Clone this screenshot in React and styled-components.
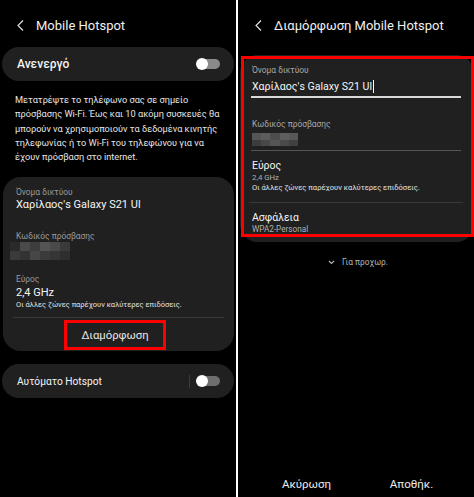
import React from "react";
import styled, { createGlobalStyle } from "styled-components";

const Global = createGlobalStyle`
  html, body { margin: 0; padding: 0; background: #fff; }
  body { font-family: Roboto, "Noto Sans", sans-serif; -webkit-font-smoothing: antialiased; }
  * { box-sizing: border-box; }
`;

const Screen = styled.div`
  display: flex;
  gap: 2px;
  width: 474px;
  height: 497px;
  background: #fff;
`;

const Panel = styled.div`
  width: 236px;
  height: 497px;
  background: #000;
  color: #f3f3f3;
  display: flex;
  flex-direction: column;
  overflow: hidden;
`;

const Header = styled.div`
  height: 47px;
  display: flex;
  align-items: center;
  gap: 12px;
  padding: 3px 0 0 17px;
  font-size: 13px;
  color: #f0f0f0;
  flex-shrink: 0;
`;

const Card = styled.div`
  background: #202020;
  border-radius: 17px;
  margin: 0 2px;
`;

const RowCard = styled(Card)`
  height: 34px;
  display: flex;
  align-items: center;
  padding: 0 14px 0 15px;
  font-size: ${(p) => p.$fs}px;
  font-weight: ${(p) => p.$fw || 400};
  margin-top: ${(p) => p.$mt || 0}px;
  white-space: nowrap;
`;

const RowLabel = styled.div`
  flex: 1;
`;

const VDivider = styled.div`
  width: 1px;
  height: 13px;
  background: #3c3c3c;
  margin-right: 7px;
`;

const Toggle = styled.div`
  position: relative;
  width: 23px;
  height: 10px;
  border-radius: 5px;
  background: ${(p) => p.$track};
  &::after {
    content: "";
    position: absolute;
    left: -1px;
    top: -1px;
    width: 12px;
    height: 12px;
    border-radius: 50%;
    background: #fff;
  }
`;

const Desc = styled.p`
  margin: 12px 0 0;
  padding: 0 8px 0 15px;
  font-size: 9.2px;
  line-height: 14.3px;
  color: #e6e6e6;
  white-space: nowrap;
`;

const InfoCard = styled(Card)`
  margin: 13px 2px 0 3px;
  padding: 9px 0 1px;
  border-radius: 18px;
`;

const Block = styled.div`
  padding: 0 13px;
  margin-top: ${(p) => p.$mt || 0}px;
`;

const Label = styled.div`
  font-size: ${(p) => p.$fs || 8.4}px;
  line-height: ${(p) => p.$lh || 12}px;
  color: ${(p) => p.$c || "#9a9a9a"};
  margin-top: ${(p) => p.$mt || 0}px;
  white-space: nowrap;
`;

const Value = styled.div`
  font-size: ${(p) => p.$fs || 11}px;
  line-height: ${(p) => p.$lh || 14}px;
  color: #f5f5f5;
  margin-top: ${(p) => p.$mt || 0}px;
  white-space: nowrap;
`;

const Mosaic = styled.div`
  display: grid;
  grid-template-columns: repeat(${(p) => p.$cols}, ${(p) => p.$w}px);
  grid-auto-rows: ${(p) => p.$h}px;
  margin: ${(p) => p.$m || 0};
`;

const Tile = styled.div`
  background: ${(p) => p.$c};
`;

const HLine = styled.div`
  height: ${(p) => p.$t || 1}px;
  background: ${(p) => p.$c || "#333"};
  margin: ${(p) => p.$m};
`;

const ButtonRow = styled.div`
  display: flex;
  justify-content: center;
  padding: 2px 0 0;
`;

const RedBox = styled.div`
  border: 3px solid #ff0000;
`;

const ConfigButton = styled(RedBox)`
  width: 102px;
  height: 30px;
  margin-left: -7px;
  display: flex;
  align-items: center;
  justify-content: center;
  font-size: 11.3px;
  color: #e8e8e8;
`;

const EditCard = styled(Card)`
  margin: 8px 0 0 2px;
  border-radius: 18px;
  padding: 1px 0 5px;
`;

const EditArea = styled(RedBox)`
  margin-left: 1px;
  padding: 5px 10px 0 8px;
`;

const Cursor = styled.span`
  display: inline-block;
  width: 1.5px;
  height: 13px;
  background: #fff;
  vertical-align: -3px;
  margin-left: 1px;
`;

const Advanced = styled.div`
  margin-top: 14px;
  height: 12px;
  display: flex;
  justify-content: center;
  align-items: center;
  gap: 7px;
  font-size: 8.4px;
  color: #b5b5b5;
  padding-left: 4px;
`;

const Footer = styled.div`
  margin-top: auto;
  display: flex;
  height: 26px;
  align-items: center;
  font-size: 11.5px;
  color: #ececec;
`;

const FooterBtn = styled.div`
  flex: 1;
  text-align: center;
  padding: ${(p) => p.$pad || 0};
`;

const Back = () => (
  <svg width="7" height="11" viewBox="0 0 7 11">
    <polyline points="6,0.5 1,5.5 6,10.5" fill="none" stroke="#e8e8e8" strokeWidth="1.1" />
  </svg>
);

const ChevronDown = () => (
  <svg width="7" height="5" viewBox="0 0 7 5">
    <polyline points="1,1 3.5,3.5 6,1" fill="none" stroke="#b5b5b5" strokeWidth="1.1" />
  </svg>
);

const pw1 = [
  "#2a2a2a", "#4a4a4a", "#3d3d3d", "#545454", "#4a4a4a", "#3a3a3a",
  "#3a3a3a", "#333", "#464646", "#3b3b3b", "#353535", "#2e2e2e",
];
const pw2 = [
  "#555", "#5c5c5c", "#4d4d4d", "#5e5e5e", "#575757",
  "#3d3d3d", "#484848", "#555", "#4a4a4a", "#404040",
];

export default function App() {
  return (
    <>
      <Global />
      <Screen>
        <Panel>
          <Header>
            <Back />
            <span>Mobile Hotspot</span>
          </Header>
          <RowCard $fs={12} $fw={500}>
            <RowLabel>Ανενεργό</RowLabel>
            <Toggle $track="#8a8a8a" />
          </RowCard>
          <Desc>
            Μετατρέψτε το τηλέφωνο σας σε σημείο
            <br />
            πρόσβασης Wi-Fi. Έως και 10 ακόμη συσκευές θα
            <br />
            μπορούν να χρησιμοποιούν τα δεδομένα κινητής
            <br />
            τηλεφωνίας ή το Wi-Fi του τηλεφώνου για να
            <br />
            έχουν πρόσβαση στο internet.
          </Desc>
          <InfoCard>
            <Block>
              <Label>Όνομα δικτύου</Label>
              <Value>Χαρίλαος's Galaxy S21 Ul</Value>
            </Block>
            <Block $mt={18}>
              <Label>Κωδικός πρόσβασης</Label>
              <Mosaic $cols={6} $w={10} $h={9} $m="0 0 0 -6px">
                {pw1.map((c, i) => (
                  <Tile key={i} $c={c} />
                ))}
              </Mosaic>
            </Block>
            <Block $mt={13}>
              <Label>Εύρος</Label>
              <Value $lh={15}>2,4 GHz</Value>
              <Label $fs={7.5} $lh={9} $c="#e0e0e0">
                Οι άλλες ζώνες παρέχουν καλύτερες επιδόσεις.
              </Label>
            </Block>
            <HLine $c="#383838" $m="8px 10px 0" />
            <ButtonRow>
              <ConfigButton>Διαμόρφωση</ConfigButton>
            </ButtonRow>
          </InfoCard>
          <RowCard $fs={10.2} $mt={13}>
            <RowLabel>Αυτόματο Hotspot</RowLabel>
            <VDivider />
            <Toggle $track="#6e6e6e" />
          </RowCard>
        </Panel>

        <Panel>
          <Header>
            <Back />
            <span>Διαμόρφωση Mobile Hotspot</span>
          </Header>
          <EditCard>
            <EditArea>
              <Label $c="#a8a8a8">Όνομα δικτύου</Label>
              <Value $fs={10.6} $mt={4}>
                Χαρίλαος's Galaxy S21 Ul
                <Cursor />
              </Value>
              <HLine $t={1.5} $c="#d8d8d8" $m="2px 0 0 -1px" />
              <Label $c="#a8a8a8" $mt={20.5}>
                Κωδικός πρόσβασης
              </Label>
              <Mosaic $cols={5} $w={9.2} $h={6.5} $m="3px 0 0">
                {pw2.map((c, i) => (
                  <Tile key={i} $c={c} />
                ))}
              </Mosaic>
              <HLine $c="#555" $m="4px 0 0 -1px" />
              <Value $fs={10.5} $mt={8}>
                Εύρος
              </Value>
              <Label $c="#b0b0b0" $fs={7.8} $lh={10}>2,4 GHz</Label>
              <Label $c="#e0e0e0" $fs={7.6} $lh={10}>
                Οι άλλες ζώνες παρέχουν καλύτερες επιδόσεις.
              </Label>
              <HLine $c="#383838" $m="9px -2px 0 -3px" />
              <Value $fs={10.5} $mt={8}>
                Ασφάλεια
              </Value>
              <Label $c="#b0b0b0" $fs={8.2} $lh={9}>WPA2-Personal</Label>
            </EditArea>
          </EditCard>
          <Advanced>
            <ChevronDown />
            <span>Για προχωρ.</span>
          </Advanced>
          <Footer>
            <FooterBtn $pad="0 0 0 16px">Ακύρωση</FooterBtn>
            <FooterBtn $pad="0 10px 0 0">Αποθήκ.</FooterBtn>
          </Footer>
        </Panel>
      </Screen>
    </>
  );
}
